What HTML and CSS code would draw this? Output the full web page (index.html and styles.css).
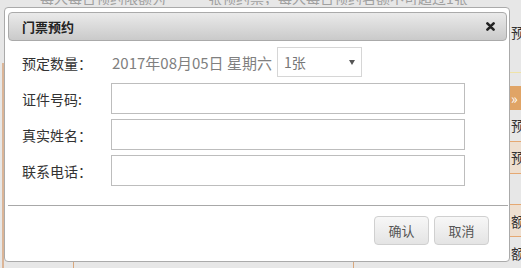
FILE: index.html
```html
<!DOCTYPE html>
<html lang="zh-CN">
<head>
    <meta charset="UTF-8">
    <title>门票预约</title>
    <link rel="stylesheet" href="styles.css">
</head>
<body>
    <div class="page">
        <div class="edge-left"><div class="edge-rule"></div></div>
        <div class="center">
            <p class="notice">每人每日预约限额为　　　张预约票，每人每日预约名额不可超过1张</p>
            <div class="footer-row">
                <div class="cell-a"></div>
                <div class="cell-b"></div>
            </div>
        </div>
        <div class="edge-right">
            <div class="side-row side-head">预</div>
            <div class="side-row side-hot">»</div>
            <div class="side-row side-plain">预</div>
            <div class="side-row side-shade">预</div>
            <div class="side-row side-empty"></div>
            <div class="side-row side-shade">额</div>
            <div class="side-row side-plain">额</div>
        </div>
    </div>

    <!-- 预约弹窗 -->
    <div class="dialog">
        <div class="titlebar">
            <span class="title">门票预约</span>
            <svg class="close" width="9" height="9" viewBox="0 0 9 9">
                <path d="M1.4 1.4 L7.6 7.6 M7.6 1.4 L1.4 7.6" stroke="#222" stroke-width="2.6" stroke-linecap="round"/>
            </svg>
        </div>
        <div class="form">
            <label class="label">预定数量：</label>
            <div class="value">
                <span class="date">2017年08月05日 星期六</span>
                <div class="picker">
                    <span>1张</span>
                    <span class="arrow"></span>
                </div>
            </div>
            <label class="label">证件号码:</label>
            <input class="field" type="text">
            <label class="label">真实姓名：</label>
            <input class="field" type="text">
            <label class="label">联系电话：</label>
            <input class="field" type="text">
        </div>
        <div class="divider"></div>
        <div class="actions">
            <button class="btn">确认</button>
            <button class="btn">取消</button>
        </div>
    </div>
</body>
</html>
```

FILE: styles.css
```css
body {
    margin: 0;
    font-family: "Noto Sans CJK SC", "Liberation Sans", sans-serif;
    background-color: #e7e7e7;
}

/* 背景页面 */
.page {
    width: 521px;
    height: 268px;
    display: flex;
    overflow: hidden;
}

.edge-left {
    width: 4px;
    padding-top: 63px;
    box-sizing: border-box;
}

.edge-rule {
    height: 100%;
    margin-left: 2px;
    border-left: 2px solid #dbb597;
}

.center {
    flex: 1;
    display: flex;
    flex-direction: column;
}

.notice {
    margin: -9px 0 0;
    padding-left: 36px;
    font-size: 14px;
    line-height: 14px;
    color: #a0a0a0;
    white-space: nowrap;
    overflow: hidden;
}

.footer-row {
    margin-top: auto;
    height: 6px;
    display: flex;
}

.cell-a {
    width: 69px;
    border-right: 1px solid #d9a77c;
}

.cell-b {
    width: 279px;
    border-right: 1px solid #d9a77c;
}

.edge-right {
    width: 11px;
    display: flex;
    flex-direction: column;
    font-size: 14px;
    line-height: 14px;
    color: #333;
    white-space: nowrap;
    overflow: hidden;
}

.side-row {
    display: flex;
    align-items: center;
    padding-left: 1px;
}

.side-head {
    height: 74px;
    padding-top: 25px;
    box-sizing: border-box;
    align-items: flex-start;
    border-bottom: 1px solid #efe3a8;
}

.side-hot {
    height: 24px;
    margin-top: 13px;
    background-color: #e0a466;
    color: #fff;
}

.side-plain {
    height: 31px;
}

.side-shade {
    height: 32px;
    background-color: #eedfd0;
    border-top: 1px solid #e5a872;
    border-bottom: 1px solid #e5a872;
}

.side-empty {
    height: 30px;
}

/* 弹窗 */
.dialog {
    position: absolute;
    left: 4px;
    top: 7px;
    width: 506px;
    height: 255px;
    box-sizing: border-box;
    border: 1px solid #aaa;
    border-radius: 4px;
    background-color: #fff;
    padding: 4px 2px 0 3px;
    display: flex;
    flex-direction: column;
}

.titlebar {
    height: 29px;
    box-sizing: border-box;
    border: 1px solid #aaa;
    border-radius: 4px;
    background: linear-gradient(#eaeaea, #cacaca);
    display: flex;
    align-items: center;
    justify-content: space-between;
    padding: 0 11px 0 13px;
}

.title {
    font-size: 13px;
    font-weight: bold;
    color: #222;
}

.form {
    padding: 6px 0 0 14px;
    display: grid;
    grid-template-columns: 89px 354px;
    grid-auto-rows: 31px;
    row-gap: 5px;
    align-items: center;
}

.label {
    font-size: 14px;
    color: #333;
}

.value {
    display: flex;
    align-items: center;
    gap: 5px;
    height: 31px;
    align-self: start;
}

.date {
    font-size: 15px;
    color: #808080;
    padding-left: 1px;
}

.picker {
    width: 85px;
    height: 30px;
    box-sizing: border-box;
    border: 1px solid #d6d6d6;
    display: flex;
    align-items: center;
    justify-content: space-between;
    padding: 0 6px 0 6px;
    font-size: 14px;
    color: #777;
    align-self: flex-start;
}

.arrow {
    width: 0;
    height: 0;
    border-left: 3.5px solid transparent;
    border-right: 3.5px solid transparent;
    border-top: 5px solid #555;
}

.field {
    width: 354px;
    height: 31px;
    box-sizing: border-box;
    margin: 0;
    border: 1px solid #bdbdbd;
    background-color: #fff;
}

.divider {
    margin: 19px -1px 0 0;
    border-top: 1px solid #a8a8a8;
}

.actions {
    display: flex;
    justify-content: flex-end;
    gap: 5px;
    padding: 10px 18px 0 0;
}

.btn {
    width: 55px;
    height: 29px;
    font-family: inherit;
    font-size: 13px;
    color: #555;
    border: 1px solid #d0d0d0;
    border-radius: 4px;
    background: linear-gradient(#f7f7f7, #e4e4e4);
    padding: 0;
}
```
